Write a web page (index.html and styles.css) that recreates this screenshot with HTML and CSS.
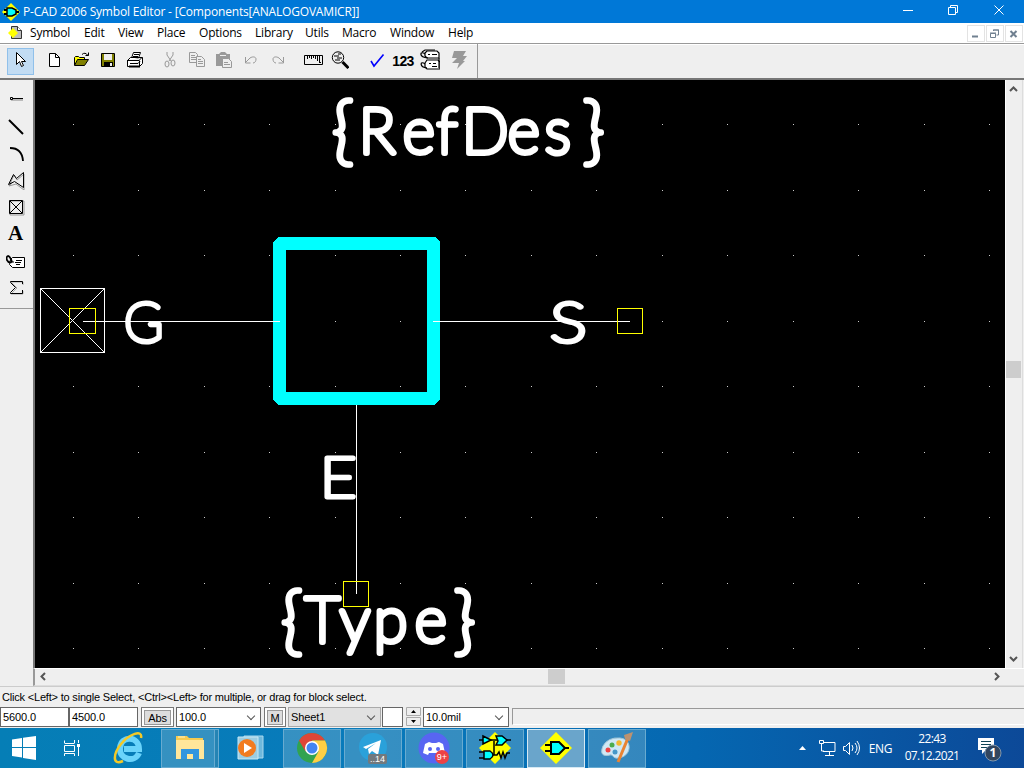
FILE: index.html
```
<!DOCTYPE html>
<html lang="en"><head><meta charset="utf-8"><title>P-CAD 2006 Symbol Editor</title>
<link rel="stylesheet" href="styles.css"></head><body>
<div class="app">
<header class="title">
<svg class="logo" width="18" height="18" viewBox="0 0 18 18"><path d="M9 0l9 9-9 9-9-9z" fill="#ff0"/><path d="M2 7h4M2 11h4M13 9h4" stroke="#000" stroke-width="2"/><path d="M5 5h5l4 2v4l-4 2H5z" fill="#0ff" stroke="#000" stroke-width="1.5"/></svg>
<span class="caption">P-CAD 2006 Symbol Editor - [Components[ANALOGOVAMICR]]</span>
<svg class="winctl" width="110" height="23" fill="none" stroke="#fff"><path d="M5 10.500h10M50.500 7.500h7v7h-7zM52.500 7V5.500h7v7H58M96.500 5.500l9 9M105.500 5.500l-9 9"/></svg>
</header>
<nav class="menu">
<svg class="docicon" width="16" height="16" viewBox="0 0 16 16"><path d="M3.500 1.500h6l4 4v8h-10z" fill="#bbb" stroke="#333"/><path d="M9.500 1.500v4h4" fill="#fff" stroke="#333"/><path d="M5 3l5 5-5 5-5-5z" fill="#ff0"/></svg>
<span class="m1">Symbol</span><span class="m2">Edit</span><span class="m3">View</span><span class="m4">Place</span><span class="m5">Options</span><span class="m6">Library</span><span class="m7">Utils</span><span class="m8">Macro</span><span class="m9">Window</span><span class="m10">Help</span>
<div class="mdi"><svg width="17" height="17"><path d="M5 11.500h6" stroke="#708090" stroke-width="2"/></svg><svg width="17" height="17" fill="none" stroke="#708090"><path d="M4.500 8.500h5v4h-5zM4 8h6M7.500 6V5h5v5h-2M7 5h6" /></svg><svg width="17" height="17"><path d="M5.500 6l6 6M11.500 6l-6 6" stroke="#708090" stroke-width="2"/></svg></div>
</nav>
<div class="tools">
<div class="btn on"><svg width="18" height="18"><path d="M5.500 1.500v12l3-3 2 5 2-1-2-4h4z" fill="#fff" stroke="#000"/></svg></div>
<div class="grp">
<div class="btn"><svg width="18" height="18"><path d="M4.500 2.500h6l4 4v9h-10z" fill="#fff" stroke="#000"/><path d="M10.500 2.500v4h4" fill="none" stroke="#000"/></svg></div>
<div class="btn"><svg width="18" height="18"><path d="M2.500 14V6.500l1-1h3l1 1h5V9" fill="#ff0" stroke="#000"/><path d="M2.500 14.500l3-6h11l-4 6z" fill="#808000" stroke="#000"/><path d="M10 3.500q3-3 6 1M16.500 1.500v3h-3" fill="none" stroke="#000"/></svg></div>
<div class="btn"><svg width="18" height="18"><path d="M2.500 2.500h13v13h-13z" fill="#808000" stroke="#000"/><path d="M5 3h8v6H5z" fill="#eee"/><path d="M5 11h9v4H5z"/><path d="M11 12h2v3h-2z" fill="#eee"/></svg></div>
<div class="btn"><svg width="18" height="18" stroke="#000" fill="#fff"><path d="M5.500 7l2-5.500h7L12.500 7zM8 3.500h5M7 5.500h5"/><path d="M1.500 9.500l3-3h12v6l-3 3h-12zM1 9.500h12l3-3M13.500 9.500v6M4 12.500h8l2-2"/><path d="M3 15.500h11" stroke-width="2"/></svg></div>
</div>
<div class="grp grey">
<div class="btn"><svg width="18" height="18" fill="none" stroke="#999"><path d="M6 1v3l4 6M12 1v3l-4 6"/><ellipse cx="6" cy="13" rx="2" ry="3"/><ellipse cx="12" cy="12" rx="2" ry="3"/></svg></div>
<div class="btn"><svg width="18" height="18" fill="#eee" stroke="#999"><path d="M1.500 1.500h6l2 2v8h-8zM3 4.500h4M3 6.500h5M3 8.500h5"/><path d="M8.500 5.500h5l3 3v7h-8zM10 8.500h3M10 10.500h5M10 12.500h5"/></svg></div>
<div class="btn"><svg width="18" height="18"><path d="M1 3h3l2-2h4l2 2h3v12H1z" fill="#999"/><path d="M5 4.500h6" stroke="#eee"/><path d="M7.500 7.500h6l3 3v6h-9zM9 11.500h4M9 13.500h6" fill="#eee" stroke="#999"/></svg></div>
<div class="btn"><svg width="18" height="18" fill="none" stroke="#999"><path d="M3.500 6v6h5M4 11l4-4c3-2 6-1 6 1s-1 4-3 4"/></svg></div>
<div class="btn"><svg width="18" height="18" fill="none" stroke="#999"><path d="M14.500 6v6h-5M14 11l-4-4c-3-2-6-1-6 1s1 4 3 4"/></svg></div>
</div>
<div class="grp">
<div class="btn"><svg width="20" height="18" fill="none" stroke="#000"><path d="M1.500 4.500h18v9h-18zM4.500 5v3M6.500 5v2M8.500 5v3M10.500 5v2M12.500 5v3M14.500 5v5M16.500 5v6M18 11.500h-2"/></svg></div>
<div class="btn"><svg width="18" height="18" fill="none" stroke="#000"><circle cx="7" cy="6.500" r="5.700"/><path d="M3 5h5M6 7h5M4 9h5M7 3h3"/><path d="M11.500 11l6 6" stroke-width="3"/></svg></div>
</div>
<div class="grp">
<div class="btn"><svg width="18" height="18" fill="none" stroke="#00f"><path d="M4 10l3 5L16.500 3.500" stroke-width="1.600"/></svg></div>
<div class="btn"><b class="n123">123</b></div>
<div class="btn"><svg width="20" height="22" fill="#fff" stroke="#000" stroke-width="1.200"><path d="M5 4l2-2h10l2 2v5H7L5 7zM5 14l2-3h11l2 2v7H7l-2-2z"/><path d="M5 5C0 1-2 8 8 9M5 15c-5-4-6 3 2 4M8 5.500h2M12 5.500h5M9 14.500h2M13 14.500h3M12 17.500h5M2 3l3-2h10M19 9v10" fill="none"/></svg></div>
<div class="btn last"><svg width="18" height="20"><path d="M5 1h12l-3 5h4l-4 5h2l-8 8 2-6H3l5-5H3z" fill="#999"/></svg></div>
</div>
</div>
<main class="work">
<aside class="side"><div class="palette">
<svg width="18" height="18"><path d="M4 9h12" stroke="#888"/><path d="M3.500 6.500h2v2h-2zM6 7.500h10" stroke="#000" fill="none"/></svg>
<svg width="18" height="18"><path d="M2 2l14 14" stroke="#000" stroke-width="2"/></svg>
<svg width="18" height="18"><path d="M3 3q12 0 13 13" fill="none" stroke="#000" stroke-width="1.800"/></svg>
<svg width="18" height="18" fill="none"><path d="M2 14l5-11 3 5 7-6v16l-8-6-7 2 4-4" stroke="#999"/><path d="M1.500 12.500l5-10 3 4 7-6v15l-9-6z" stroke="#000"/></svg>
<svg width="18" height="18" fill="none"><path d="M3 2h14v14H3z" stroke="#999"/><path d="M2.500 1.500h13v13h-13zM3 2l12 12M15 2L3 14" stroke="#000"/></svg>
<b>A</b>
<svg width="20" height="18" fill="#fff" stroke="#000"><path d="M6.500 4.500h12v10h-12l-3-3 1-5z"/><path d="M10 7.500h6M9 9.500h6M10 11.500h4M6 9h2"/><path d="M6 9C1 11-1 4 2 3c2 0 4 6 4 6" fill="none" stroke-width="1.800"/></svg>
<svg width="18" height="18" fill="none"><path d="M16 5V2H4l6 6-6 6h12v-3" stroke="#aaa"/><path d="M15.500 4V1.500h-12v1l5 5-5 5v1h12V10" stroke="#000"/></svg>
</div></aside>
<svg class="canvas" width="970" height="588" viewBox="35 80 970 588">
<defs><path id="dots" d="M73 .5h1m64 0h1m65 0h1m64 0h1m65 0h1m64 0h1m64 0h1m65 0h1m64 0h1m65 0h1m64 0h1m65 0h1m64 0h1m65 0h1m64 0h1" stroke="#ccc"/></defs>
<g shape-rendering="crispEdges"><use href="#dots" y="124"/><use href="#dots" y="190"/><use href="#dots" y="255"/><use href="#dots" y="321"/><use href="#dots" y="386"/><use href="#dots" y="452"/><use href="#dots" y="517"/><use href="#dots" y="583"/><use href="#dots" y="648"/>
<path d="M278 237h157l5 5v157l-5 6H278l-5-5V242zM286 250v142h141V250z" fill="#0ff" fill-rule="evenodd"/>
<g fill="none" stroke="#fff"><path d="M40.500 288.500h64v64h-64zM41 289l63 63M104 289l-63 63M83 321.500h197M433 321.500h197M356.500 405v189"/></g>
<g fill="none" stroke="#ff0"><path d="M69.500 308.500h26v25h-26zM617.500 308.500h25v25h-25zM343.500 581.500h25v25h-25z"/></g></g>
<g class="ref">
<text class="big"><tspan class="brace" x="332" y="156">{</tspan><tspan x="359 403 437 462 508 545" y="153">RefDes</tspan><tspan class="brace" x="583" y="156">}</tspan></text>
<text class="big"><tspan class="brace" x="281" y="646">{</tspan><tspan x="305 340 374 415" y="642">Type</tspan><tspan class="brace" x="454" y="646">}</tspan></text>
<text class="pin" transform="translate(124 342) scale(.95 1)">G</text><text class="pin" transform="translate(550 342) scale(1.24 1)">S</text><text class="pin" transform="translate(320 497) scale(1.12 1)">E</text>
</g></svg>
<div class="vscroll"><svg width="16" height="588" fill="none" stroke="#555" stroke-width="2"><path d="M4 11l3.500-3.500L11 11M4 577l3.500 3.500L11 577"/><path d="M0 281h15v17H0z" fill="#cdcdcd" stroke="none"/></svg></div>
</main>
<div class="hscroll"><svg width="970" height="16" fill="none" stroke="#555" stroke-width="2"><path d="M10 4L6.500 7.500 10 11M960 4l3.500 3.500L960 11"/><path d="M513 0h17v15h-17z" fill="#cdcdcd" stroke="none"/></svg></div>
<div class="status">Click &lt;Left&gt; to single Select, &lt;Ctrl&gt;&lt;Left&gt; for multiple, or drag for block select.</div>
<div class="fields"><div class="f w69">5600.0</div><div class="f w69">4500.0</div><div class="sb abs"><span>Abs</span></div>
<div class="f combo zoomf">100.0<i></i></div><div class="sb mm"><span>M</span></div><div class="f combo sheet">Sheet1<i></i></div><div class="f blank"></div>
<div class="spin"><svg width="15" height="20"><path d="M.5.500h14v8H.5zM.5 10.500h14v8H.5z" fill="#eee" stroke="#aaa"/><path d="M5 6h5L7.500 3zM5 13h5l-2.500 3z"/></svg></div>
<div class="f combo mil">10.0mil<i></i></div><div class="info"></div></div>
<footer class="task">
<svg class="start" width="25" height="24" fill="#fff"><path d="M0 3.500L10 2v9H0zM11 1.800L24 0v11H11zM0 12h10v9.500L0 20zM11 12h13v12l-13-2z"/></svg>
<svg class="view" width="18" height="16" fill="none" stroke="#fff"><path d="M.5 3V.5M.5 3.500h10M10.500 0v3M.5 5.500h10v6H.5zM.5 16v-2.500h10V16M14.500 0v3M14.500 7v9"/><path d="M13 4h3v3h-3z" fill="#fff" stroke="none"/></svg>
<div class="slot"><svg width="36" height="34" viewBox="0 0 36 34" fill="none"><path d="M28 22c-4 10-20 7-19-5 1-13 19-12 19 1H13" stroke="#6ad4fb" stroke-width="6"/><path d="M12 30C1 35 2 23 10 13S32-2 30 7" stroke="#f4c927" stroke-width="2.500"/></svg></div>
<div class="slot run stack"><svg width="32" height="28"><path d="M2 2h11l2 2h14v20H2z" fill="#f5cb50"/><path d="M2 6h28v19H2z" fill="#ffe69a"/><path d="M4 3h7" stroke="#fff3c8"/><path d="M7 25V15h18v10h-6v-5h-6v5z" fill="#3296df"/></svg></div>
<div class="slot"><svg width="34" height="32"><path d="M10 4h19v22H10z" fill="#6eb8dc" stroke="#a9d9ee"/><path d="M4 5h20v22H4z" fill="#9ccde2" stroke="#c9e8f4"/><circle cx="13" cy="16" r="9" fill="#f27b1f"/><path d="M10 11l8 5-8 5z" fill="#fff"/></svg></div>
<div class="slot run"><svg width="32" height="32" viewBox="0 0 32 32"><circle cx="16" cy="16" r="15" fill="#31a350"/><path d="M3 8.500A15 15 0 0129 8.500H16l-6.500 11z" fill="#df4638"/><path d="M29 8.500A15 15 0 0116 31l6.500-11.500L16 8.500z" fill="#ffcf45"/><circle cx="16" cy="16" r="7" fill="#fff"/><circle cx="16" cy="16" r="5.500" fill="#4284f3"/></svg></div>
<div class="slot run"><svg width="34" height="32"><circle cx="17" cy="15" r="14" fill="#2aa1da"/><path d="M7 15L25 8l-3 15-6-4-3 3-1-5 8-6-10 6z" fill="#fff"/></svg><span class="badge tg">..14</span></div>
<div class="slot run"><svg width="34" height="34"><circle cx="17" cy="17" r="15.500" fill="#5865f2"/><path d="M12 11l3 1h4l3-1 4 2 2 9-5 2-1-2H12l-1 2-5-2 2-9z" fill="#fff"/><circle cx="13" cy="18" r="2" fill="#5865f2"/><circle cx="21" cy="18" r="2" fill="#5865f2"/></svg><span class="badge dc">9+</span></div>
<div class="slot run"><svg width="34" height="34"><path d="M17 1l16 16-16 16L1 17z" fill="#ff0"/><path d="M1 9h32M1 21h7M1 27h7M14 24h5l2-3 2 6 2-6 2 6 2-5h3M16 10v14" fill="none" stroke="#000" stroke-width="1.500"/><path d="M5 5l8 4-8 4zM18 5h6l5 4-5 5h-6l2-4zM6 20h6q6 4 0 8H6z" fill="#0ff" stroke="#000" stroke-width="1.500"/></svg></div>
<div class="slot run active"><svg width="34" height="34"><path d="M17 1l16 16-16 16L1 17z" fill="#ff0"/><path d="M6 14h6M6 20h6M24 17h6" stroke="#000" stroke-width="2"/><path d="M12 11h8l6 6-6 6h-8z" fill="#0ff" stroke="#000" stroke-width="2"/></svg></div>
<div class="slot run"><svg width="34" height="34"><path d="M3 15q5-9 17-8c13 1 12 19-2 20-5 1-5-4-8-3C2 26 0 22 3 15z" fill="#cfe8f5" stroke="#a4c7d8"/><circle cx="8" cy="19" r="2.500" fill="#e44"/><circle cx="12" cy="14" r="2.500" fill="#4cac4c"/><circle cx="19" cy="12" r="2.700" fill="#f5b82e"/><circle cx="15" cy="21" r="2.500" fill="#4698c8"/><path d="M28 7L18 31" stroke="#e98433" stroke-width="3"/><path d="M25 8l-1-4 9-3-3 9z" fill="#bd9270"/></svg></div>
<div class="tray"><svg width="64" height="22" fill="none" stroke="#fff"><path d="M0 13h7L3.500 9z" fill="#fff" stroke="none"/><path d="M25 5.500h11v9H24M30.500 15v3M26 18.500h9M20.500 3.500h4v3h-4zM22.500 7v7H25M44.500 9.500h2l4-4v12l-4-4h-2zM53 8q2 3 0 6M56 6q4 5 0 10M58 4q5 7 0 14"/></svg><span class="lang">ENG</span><div class="clock">22:43<br>07.12.2021</div><svg class="note" width="28" height="28"><path d="M1 2h16v12H9l-4 4v-4H1z" fill="#fff"/><path d="M4 5.500h10M4 8.500h10M4 11.500h6" stroke="#145"/><circle cx="16" cy="17" r="8" fill="#32455e" stroke="#8297ab"/><text x="16" y="21" text-anchor="middle" fill="#fff" font-weight="bold" font-size="12">1</text></svg></div>
</footer>
</div></body></html>
```
FILE: styles.css
```
*{box-sizing:border-box}
body{margin:0;background:#efefef;overflow:hidden;font-family:"Open Sans","Noto Sans",sans-serif;font-size:12px;color:#000}
svg{display:block;flex:none}
.app{width:1024px;height:768px;display:flex;flex-direction:column;background:#efefef}
.title{height:23px;flex:none;background:#0078d7;color:#fff;display:flex;align-items:center;padding-left:2px}
.caption{margin-left:3px;letter-spacing:-.18px;white-space:nowrap}
.winctl{margin-left:auto;margin-right:16px}
.menu{height:20px;flex:none;background:#fff;display:flex;align-items:center;padding-left:8px}
.menu span{flex:none;letter-spacing:-.2px;white-space:nowrap;padding-bottom:2px}
.docicon{margin-right:6px}
.m1{width:54px}.m2{width:34px}.m3{width:39px}.m4{width:42px}.m5{width:56px}.m6{width:50px}.m7{width:37px}.m8{width:48px}.m9{width:58px}
.mdi{margin-left:auto;display:flex;gap:1px;padding-right:1px}
.mdi svg{outline:1px solid #e3e3e3;outline-offset:-1px;width:18px}
.tools{height:37px;flex:none;border-top:1px solid #999;border-bottom:2px solid #777;box-shadow:inset 0 1px #fff;display:flex;align-items:center;padding-left:7px;gap:8px}
.grp{display:flex}
.btn{width:27px;height:27px;display:flex;align-items:center;justify-content:center}
.btn svg{margin:-2px 0 0 -1px}
.on{background:#c2dcf3;border:1px solid #90c0ea}
.tools>.on{margin-right:-1px}
.n123{font:bold 14px "Liberation Sans",sans-serif;letter-spacing:-.7px;margin-left:1px}
.tools .grp:last-child{height:34px;align-items:center;border-right:1px solid #999;padding-right:6px}
.btn.last{width:28px}
.btn.last svg,.tools .grp:last-child svg{margin-left:1px}
.work{height:588px;flex:none;display:flex}
.side{width:35px;border-right:2px solid #777;background:#efefef}
.palette{height:229px;border-bottom:1px solid #999;display:flex;flex-direction:column;align-items:center;padding:11px 2px 0 0;gap:9px}
.palette>*{height:18px;flex:none}
.palette b{font:bold 21px/15px "Liberation Serif",serif}
.canvas{background:#000}
.ref text{fill:#fff;stroke:#fff;stroke-linejoin:round;stroke-linecap:round;font-family:Lato,"Open Sans",sans-serif;font-weight:100}
.ref .big{font-size:61px;stroke-width:6px}
.ref .brace{font-size:74px}
.ref .pin{font-size:56px;stroke-width:5px}
.vscroll{width:18px;border-left:1px solid #fff;border-right:1px solid #ddd}
.hscroll{height:18px;flex:none;margin-left:33px;border-left:2px solid #999;border-top:1px solid #fff;border-bottom:1px solid #ddd}
.status{height:21px;flex:none;border-top:1px solid #ccc;padding-left:2px;font:11px/21px "Liberation Sans",sans-serif;letter-spacing:-.19px}
.fields{height:21px;flex:none;display:flex;font:11px/17px "Liberation Sans",sans-serif;letter-spacing:-.1px}
.f{background:#fff;border:1px solid #666;height:20px;padding:1px 2px;white-space:nowrap;flex:none}
.w69{width:69px}
.sb{border:1px solid #777;height:20px;background:#fff;padding:2px;flex:none}
.sb span{display:block;background:#ddd;border:1px solid #999;height:15px;line-height:14px;text-align:center}
.abs{width:33px;margin-left:3px}
.combo{display:flex;justify-content:space-between;padding-right:6px}
.combo i{width:6px;height:6px;border:solid #555;border-width:0 1px 1px 0;transform:rotate(45deg);margin-top:4px}
.zoomf{width:85px;margin-left:2px}
.mm{width:22px;margin-left:3px}
.sheet{width:93px;margin-left:2px;background:#e1e1e1;border-color:#aaa}
.blank{width:21px;margin-left:1px}
.spin{margin:0 2px 0 3px}
.mil{width:86px}
.info{flex:1;margin:1px 0 3px 3px;border:1px solid #999;border-right:0;border-bottom-color:#fff}
.task{height:40px;flex:none;display:flex;align-items:center;background:linear-gradient(90deg,#057eb6 0,#087abb 35%,#0567b1 68%,#0c4998 100%);color:#fff}
.start{margin-left:12px}
.view{margin:0 20px 0 27px}
.slot{width:58px;height:39px;margin-right:3px;display:flex;align-items:center;justify-content:center;position:relative;flex:none}
.slot:first-of-type{margin-left:-2px}
.run{background:rgba(115,174,205,.43);border:1px solid #68abd0}
.stack{box-shadow:inset -3px 0 #2584b4,inset -4px 0 #68abd0}
.active{background:#6aa5cb;border:1px solid #d6e9f3}
.badge{position:absolute;right:14px;bottom:3px;background:#72797d;font:9px/10px "Liberation Sans",sans-serif;border-radius:2px;padding:0 2px}
.dc{background:#ed4245;border-radius:8px;line-height:14px;right:13px}
.tray{margin-left:auto;display:flex;align-items:center;height:40px}
.lang{font-size:12px;letter-spacing:-.4px;margin-left:6px}
.clock{width:56px;margin:0 17px 0 12px;text-align:center;line-height:17px;letter-spacing:-.65px;white-space:nowrap;padding-bottom:2px}
.note{margin:4px 19px 0 0;font-family:"Open Sans",sans-serif}
```
